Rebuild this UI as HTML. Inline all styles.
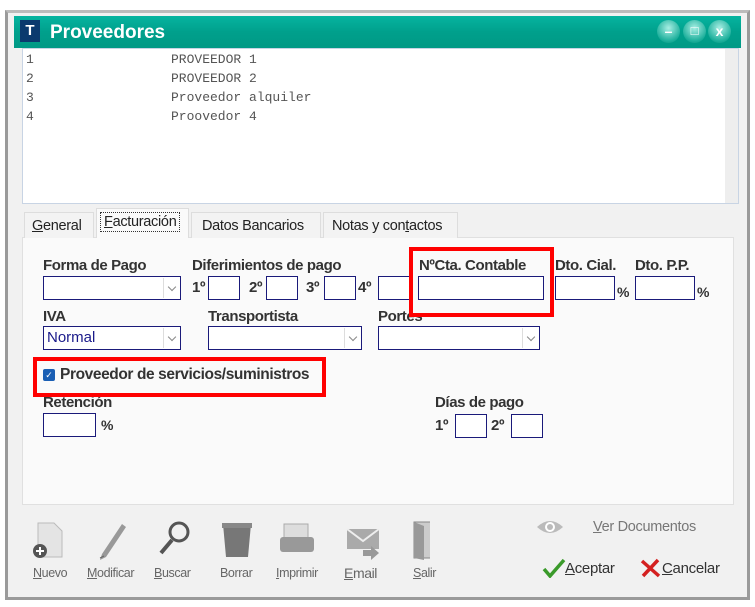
<!DOCTYPE html>
<html><head><meta charset="utf-8"><style>
*{margin:0;padding:0;box-sizing:border-box}
body{width:755px;height:607px;background:#fff;position:relative;overflow:hidden;font-family:"Liberation Sans",sans-serif}
.a{position:absolute}
.lbl{position:absolute;font-weight:bold;font-size:15px;color:#333;letter-spacing:-0.4px}
.in{position:absolute;background:#fff;border:1px solid #1a1a7a;height:24px}
.sel::after{content:"";position:absolute;right:0;top:1px;width:16px;height:20px;border-left:1px solid #ddd;background:#fff}
.sel::before{content:"";position:absolute;right:5px;top:7px;width:5px;height:5px;border-right:1px solid #888;border-bottom:1px solid #888;transform:rotate(45deg);z-index:2}
.mono{position:absolute;font-family:"Liberation Mono",monospace;font-size:13px;color:#555}
.tab{position:absolute;top:212px;height:26px;border:1px solid #ddd;border-bottom:none;background:#f3f3f3;font-size:14.5px;color:#222;padding:5px 7px;letter-spacing:-0.3px}
.bl{position:absolute;top:566px;font-size:12.5px;color:#666;letter-spacing:-0.4px}
.red{position:absolute;border:4px solid #f00}
.cb{position:absolute;top:20px;width:23px;height:23px;border-radius:50%;background:radial-gradient(circle at 50% 35%,#a8efe4,#1aae9a 70%,#0a8a78);color:#fff;font-weight:bold;text-align:center;line-height:22px;font-size:14px}
</style></head><body>
<div class="a" style="left:5px;top:10px;width:745px;height:590px;background:#f1f1f1;border:3px solid #9a9a9a;border-top-color:#bbb"></div>
<div class="a" style="left:14px;top:16px;width:727px;height:32px;background:linear-gradient(#06b4a0,#00a08c 50%,#009985)"></div>
<div class="a" style="left:20px;top:20px;width:20px;height:22px;background:#0b3a6e;color:#fff;font-weight:bold;font-size:15px;text-align:center;line-height:22px">T</div>
<div class="a" style="left:50px;top:22px;color:#fff;font-weight:bold;font-size:19px">Proveedores</div>
<div class="cb" style="left:657px">–</div>
<div class="cb" style="left:683px;font-size:13px">□</div>
<div class="cb" style="left:708px">x</div>
<div class="a" style="left:22px;top:48px;width:717px;height:156px;background:#fff;border:1px solid #c8d4e4"></div>
<div class="a" style="left:725px;top:49px;width:13px;height:154px;background:#eee"></div>
<div class="mono" style="left:26px;top:52px">1</div><div class="mono" style="left:171px;top:52px">PROVEEDOR 1</div>
<div class="mono" style="left:26px;top:71px">2</div><div class="mono" style="left:171px;top:71px">PROVEEDOR 2</div>
<div class="mono" style="left:26px;top:90px">3</div><div class="mono" style="left:171px;top:90px">Proveedor alquiler</div>
<div class="mono" style="left:26px;top:109px">4</div><div class="mono" style="left:171px;top:109px">Proovedor 4</div>
<div class="a" style="left:22px;top:237px;width:712px;height:268px;background:#fafafa;border:1px solid #e0e0e0"></div>
<div class="tab" style="left:24px;width:70px"><u>G</u>eneral</div>
<div class="tab" style="left:96px;top:208px;height:30px;width:93px;background:#fafafa;padding:3px 3px"><span style="border:1px dotted #333;padding:1px 3px;display:inline-block"><u>F</u>acturación</span></div>
<div class="tab" style="left:191px;width:130px;padding-left:10px">Datos Bancarios</div>
<div class="tab" style="left:323px;width:135px;padding-left:8px">Notas y con<u>t</u>actos</div>
<div class="lbl" style="left:43px;top:257px">Forma de Pago</div>
<div class="in sel" style="left:43px;top:276px;width:138px"></div>
<div class="lbl" style="left:192px;top:257px">Diferimientos de pago</div>
<div class="lbl" style="left:192px;top:279px">1º</div><div class="in" style="left:208px;top:276px;width:32px"></div>
<div class="lbl" style="left:249px;top:279px">2º</div><div class="in" style="left:266px;top:276px;width:32px"></div>
<div class="lbl" style="left:306px;top:279px">3º</div><div class="in" style="left:324px;top:276px;width:32px"></div>
<div class="lbl" style="left:358px;top:279px">4º</div><div class="in" style="left:378px;top:276px;width:32px"></div>
<div class="lbl" style="left:419px;top:257px">NºCta. Contable</div>
<div class="in" style="left:418px;top:276px;width:126px"></div>
<div class="lbl" style="left:555px;top:257px">Dto. Cial.</div>
<div class="in" style="left:555px;top:276px;width:60px"></div><div class="lbl" style="left:617px;top:284px;font-size:14px">%</div>
<div class="lbl" style="left:635px;top:257px">Dto. P.P.</div>
<div class="in" style="left:635px;top:276px;width:60px"></div><div class="lbl" style="left:697px;top:284px;font-size:14px">%</div>
<div class="lbl" style="left:43px;top:308px">IVA</div>
<div class="in sel" style="left:43px;top:326px;width:138px;color:#1a1a8a;font-size:15px;padding:2px 3px">Normal</div>
<div class="lbl" style="left:208px;top:308px">Transportista</div>
<div class="in sel" style="left:208px;top:326px;width:154px"></div>
<div class="lbl" style="left:378px;top:308px">Portes</div>
<div class="in sel" style="left:378px;top:326px;width:162px"></div>
<div class="a" style="left:43px;top:369px;width:12px;height:12px;background:#1a5fb4;border-radius:2px;color:#fff;font-size:9px;text-align:center;line-height:12px">✓</div>
<div class="lbl" style="left:60px;top:366px;font-size:15.5px">Proveedor de servicios/suministros</div>
<div class="lbl" style="left:43px;top:394px">Retención</div>
<div class="in" style="left:43px;top:413px;width:53px"></div><div class="lbl" style="left:101px;top:417px;font-size:14px">%</div>
<div class="lbl" style="left:435px;top:394px">Días de pago</div>
<div class="lbl" style="left:435px;top:417px">1º</div><div class="in" style="left:455px;top:414px;width:32px"></div>
<div class="lbl" style="left:491px;top:417px">2º</div><div class="in" style="left:511px;top:414px;width:32px"></div>
<div class="red" style="left:409px;top:247px;width:145px;height:70px"></div>
<div class="red" style="left:33px;top:357px;width:293px;height:40px"></div>
<svg class="a" style="left:30px;top:520px" width="400" height="42">
<path d="M8 3h16l8 8v26H8z" fill="#e4e4e4" stroke="#bbb"/><circle cx="10" cy="31" r="7" fill="#555"/><path d="M10 27v8M6 31h8" stroke="#fff" stroke-width="2"/>
<path d="M72 34l20-30 4 3-20 30-6 3z" fill="#999"/><path d="M70 38l4-2" stroke="#666"/>
<circle cx="149" cy="12" r="9" fill="none" stroke="#555" stroke-width="3"/><path d="M142 20l-11 13" stroke="#555" stroke-width="4"/>
<path d="M193 4h28l-3 33h-22z" fill="#777"/><rect x="192" y="3" width="30" height="5" fill="#888"/>
<rect x="254" y="4" width="24" height="14" fill="#ddd" stroke="#aaa"/><rect x="250" y="17" width="34" height="15" rx="3" fill="#999"/>
<path d="M317 9h32v20h-32z" fill="#aaa"/><path d="M317 9l16 12 16-12" fill="none" stroke="#eee" stroke-width="2"/><path d="M333 30h8v-4l8 7-8 7v-4h-8z" fill="#999"/>
<rect x="384" y="2" width="22" height="36" fill="#ccc" stroke="#888"/><path d="M384 2l10 4v34l-10-2z" fill="#999"/>
</svg>
<div class="bl" style="left:33px"><u>N</u>uevo</div>
<div class="bl" style="left:87px"><u>M</u>odificar</div>
<div class="bl" style="left:154px"><u>B</u>uscar</div>
<div class="bl" style="left:220px">Borrar</div>
<div class="bl" style="left:276px"><u>I</u>mprimir</div>
<div class="bl" style="left:344px;font-size:14px;top:565px"><u>E</u>mail</div>
<div class="bl" style="left:413px"><u>S</u>alir</div>
<svg class="a" style="left:535px;top:517px" width="30" height="20"><path d="M2 10q13-12 26 0q-13 12-26 0z" fill="#bbb"/><circle cx="15" cy="10" r="5" fill="#fff"/><circle cx="15" cy="10" r="3" fill="#bbb"/></svg>
<div class="a" style="left:593px;top:519px;font-size:14.5px;color:#777;letter-spacing:-0.3px"><u>V</u>er Documentos</div>
<svg class="a" style="left:542px;top:558px" width="24" height="20"><path d="M2 11l6 7 14-16" fill="none" stroke="#3a9a2a" stroke-width="3.5"/></svg>
<div class="a" style="left:565px;top:560px;font-size:15px;color:#333;letter-spacing:-0.3px"><u>A</u>ceptar</div>
<svg class="a" style="left:639px;top:558px" width="24" height="20"><path d="M3 3l17 15M19 2L4 18" stroke="#d42020" stroke-width="3.5"/></svg>
<div class="a" style="left:662px;top:560px;font-size:15px;color:#333;letter-spacing:-0.3px"><u>C</u>ancelar</div>
</body></html>
